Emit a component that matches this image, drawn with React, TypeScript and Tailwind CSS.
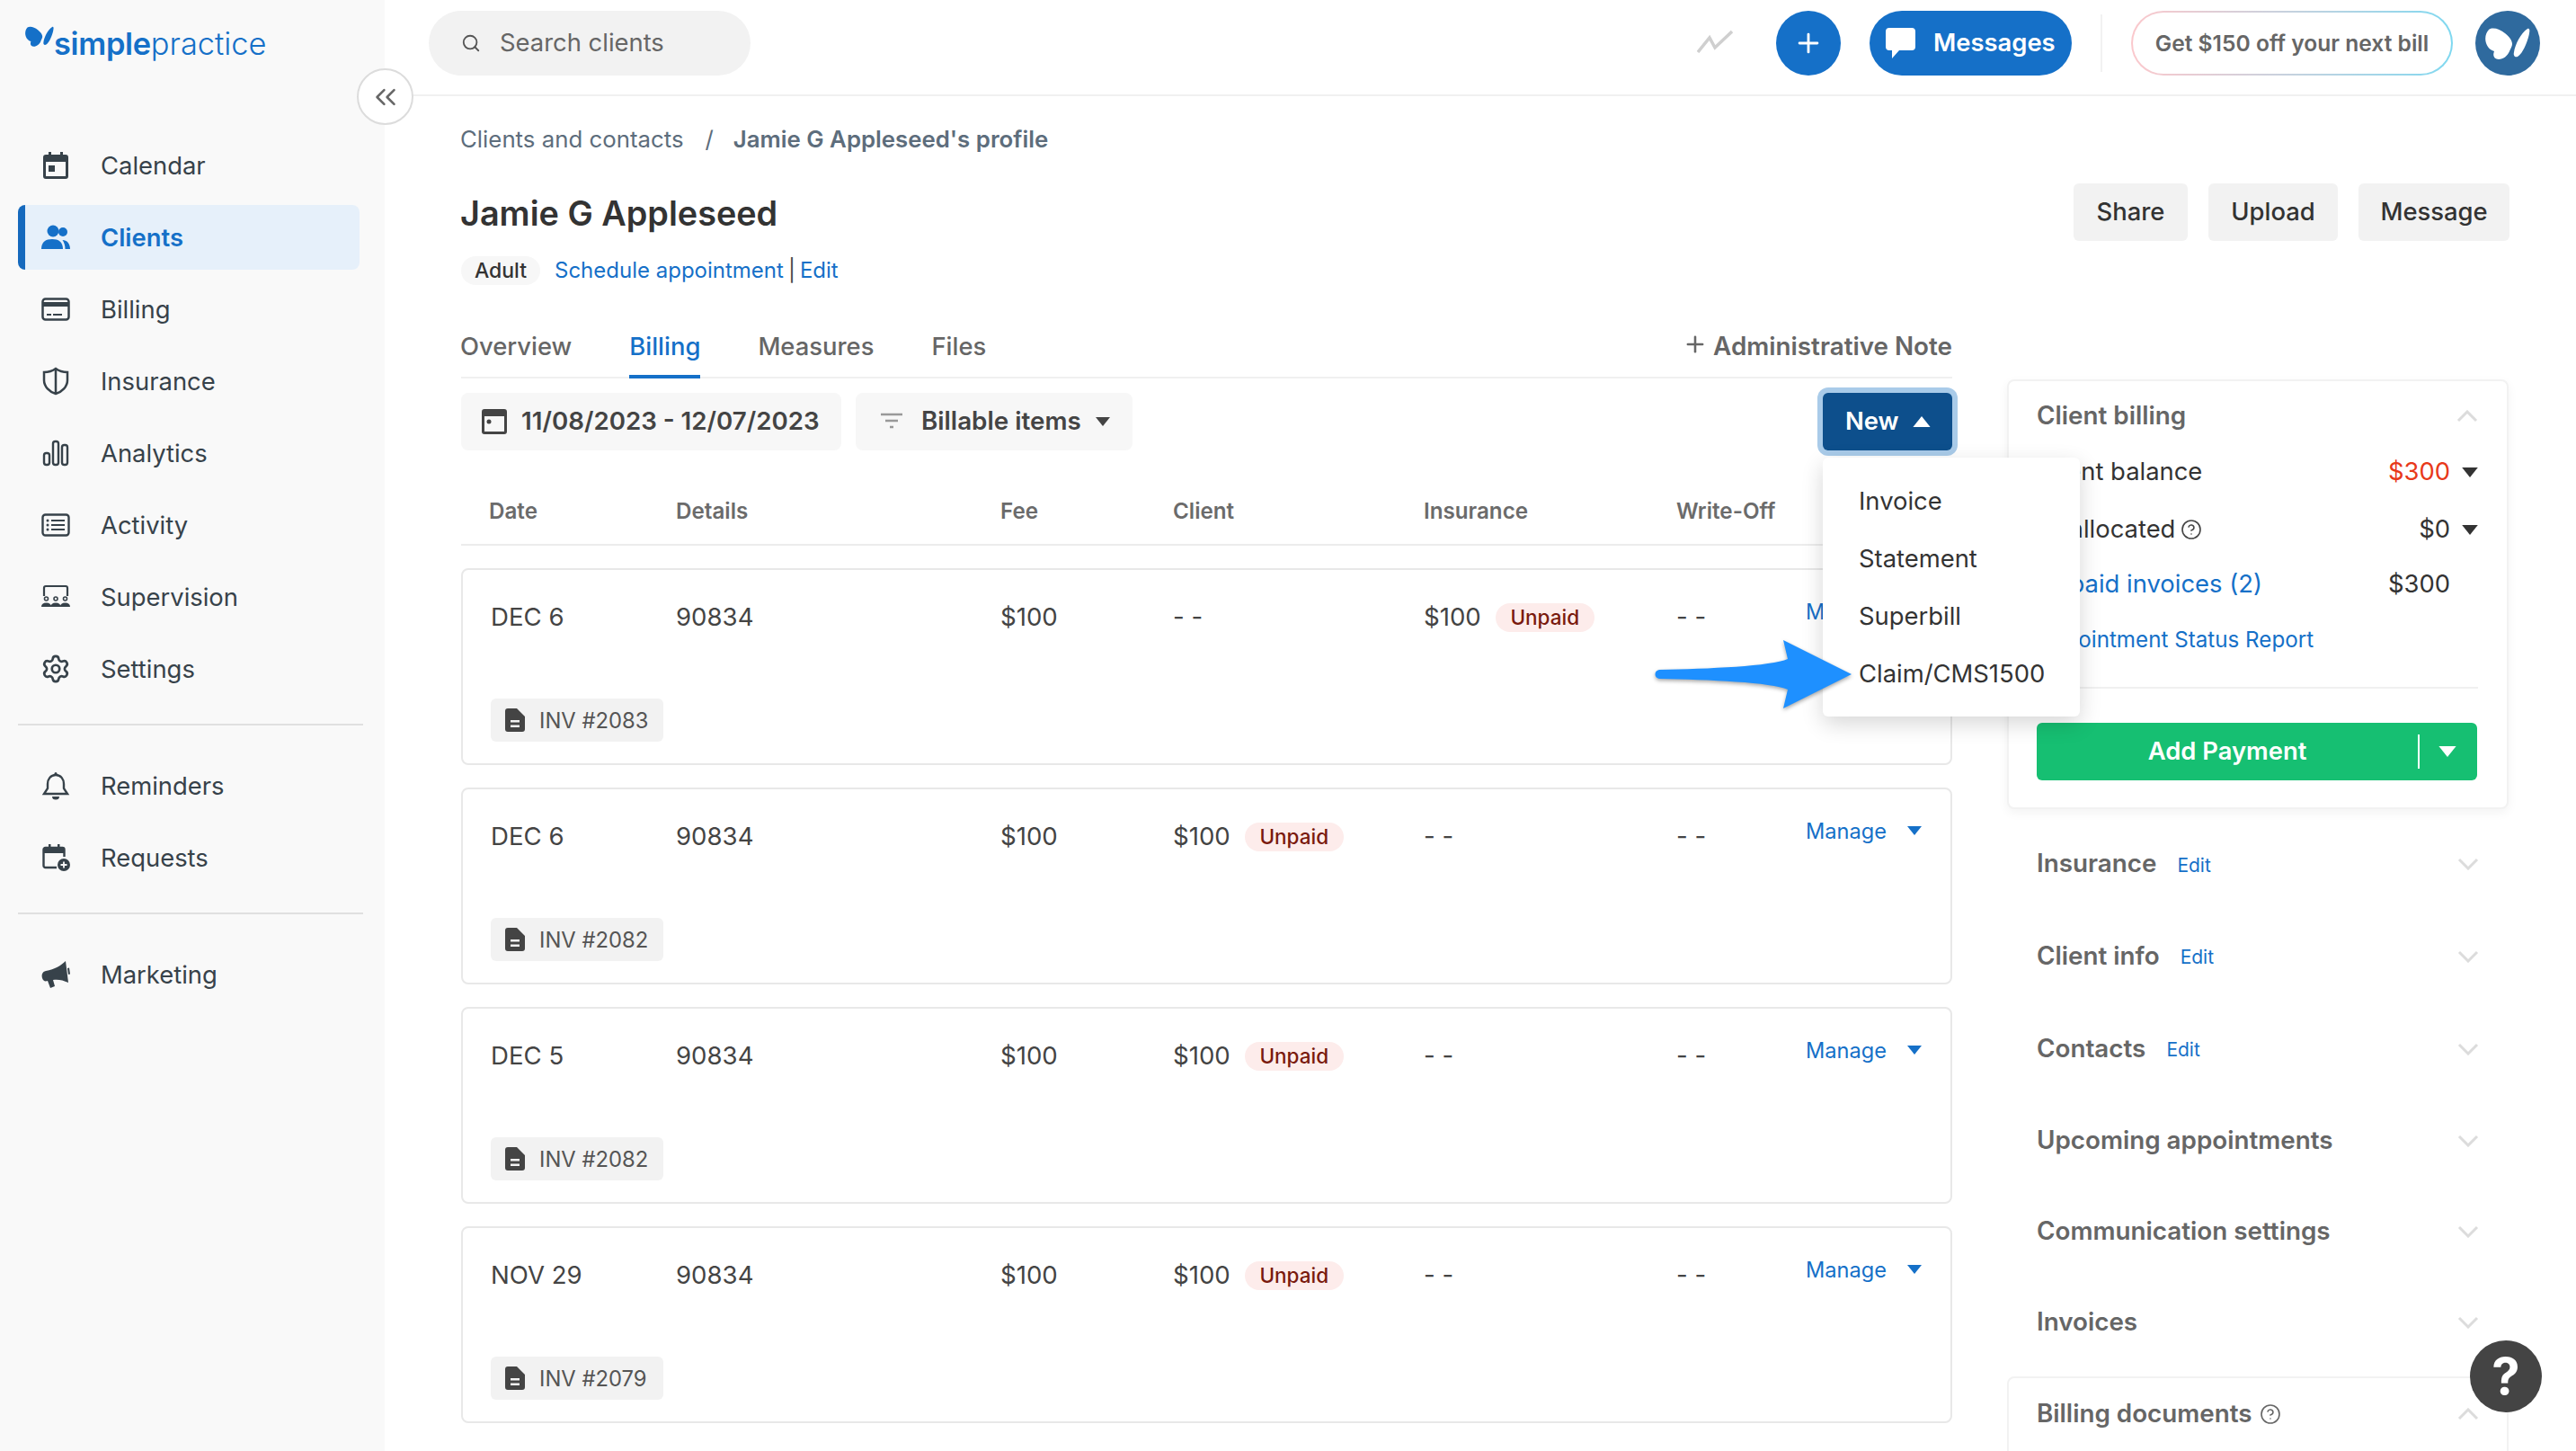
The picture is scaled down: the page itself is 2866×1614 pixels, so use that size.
import { ReactNode } from "react";
import { ChevronsLeft, CircleHelp, Plus, Search, Settings } from "lucide-react";

const Caret = ({ up, className }: { up?: boolean; className?: string }) => (
  <svg viewBox="0 0 16 10" className={className} fill="currentColor">
    <path d={up ? "M8 0l8 10H0z" : "M0 0h16L8 10z"} />
  </svg>
);

const Chevron = ({ up }: { up?: boolean }) => (
  <svg viewBox="0 0 24 14" className="w-[24px] h-[14px] text-[#dcdcdc]" fill="none" stroke="currentColor" strokeWidth="3">
    <path d={up ? "M2 12L12 2l10 10" : "M2 2l10 10L22 2"} />
  </svg>
);

const Butterfly = ({ className }: { className?: string }) => (
  <svg viewBox="0 0 50 37" className={className} fill="currentColor">
    <path d="M4 3c4-3 12-1 18 4 5 4 8 8 8 12 0 3-2 5-3 8-2 5-7 9-12 9s-7-4-5-9c-3-1-7-3-9-9C-1 12 1 6 4 3z" />
    <path d="M47 2c2-1 3 1 2 5-1 7-7 23-13 26-3 1-5-1-4-5 1-8 8-22 15-26z" />
  </svg>
);

const icons: Record<string, ReactNode> = {
  Calendar: (
    <>
      <path fillRule="evenodd" d="M8 1h3v3h10V1h3v3h3a3 3 0 0 1 3 3v21a3 3 0 0 1-3 3H5a3 3 0 0 1-3-3V7a3 3 0 0 1 3-3h3zM5 12v16h22V12z" />
      <rect x="8" y="16" width="7" height="7" />
    </>
  ),
  Clients: (
    <>
      <circle cx="13" cy="9" r="6.500" />
      <circle cx="24" cy="10" r="5" />
      <path d="M0 29c0-8 5-11 12-11s12 3 12 11z" />
      <path d="M26.500 29c0-4-1-7-3-10 5 0 8.500 4 8.500 10z" />
    </>
  ),
  Billing: (
    <>
      <rect x="1.500" y="4.500" width="29" height="23" rx="3" fill="none" stroke="currentColor" strokeWidth="2.500" />
      <rect x="1.500" y="8" width="29" height="5" />
      <rect x="6" y="21" width="5" height="2" />
      <rect x="13" y="21" width="10" height="2" />
    </>
  ),
  Insurance: (
    <path fill="none" stroke="currentColor" strokeWidth="2.500" d="M16 2c4 3 9 4 13 4v9c0 7-6 13-13 15C9 28 3 22 3 15V6c4 0 9-1 13-4zm0 0v28" />
  ),
  Analytics: (
    <g fill="none" stroke="currentColor" strokeWidth="2.400">
      <rect x="3" y="16" width="6" height="13" rx="2.500" />
      <rect x="13" y="3" width="6" height="26" rx="2.500" />
      <rect x="23" y="7" width="6" height="22" rx="2.500" />
    </g>
  ),
  Activity: (
    <>
      <rect x="1.500" y="4.500" width="29" height="23" rx="3" fill="none" stroke="currentColor" strokeWidth="2.400" />
      <circle cx="7" cy="11" r="1.500" />
      <circle cx="7" cy="16" r="1.500" />
      <circle cx="7" cy="21" r="1.500" />
      <path stroke="currentColor" strokeWidth="2.200" d="M11 11h15M11 16h15M11 21h15" />
    </>
  ),
  Supervision: (
    <>
      <path fill="none" stroke="currentColor" strokeWidth="2.200" d="M3 15V6a2 2 0 0 1 2-2h22a2 2 0 0 1 2 2v9" />
      <g fill="none" stroke="currentColor" strokeWidth="1.600">
        <circle cx="5.500" cy="18" r="2" />
        <circle cx="16" cy="18" r="2" />
        <circle cx="26.500" cy="18" r="2" />
      </g>
      <path d="M0 27c0-3 2-4.500 5.500-4.500S11 24 11 27zM10.500 27c0-3 2-4.500 5.500-4.500s5.500 1.500 5.500 4.500zM21 27c0-3 2-4.500 5.500-4.500S32 24 32 27z" />
    </>
  ),
  Reminders: (
    <>
      <path fill="none" stroke="currentColor" strokeWidth="2.400" d="M16 4c-6 0-9 5-9 10v5l-4 6h26l-4-6v-5c0-5-3-10-9-10z" />
      <circle cx="16" cy="2.500" r="1.500" />
      <path d="M12 28h8a4 3.500 0 0 1-8 0z" />
    </>
  ),
  Requests: (
    <>
      <path fill="none" stroke="currentColor" strokeWidth="2.400" d="M17 27H4.500a2 2 0 0 1-2-2V7a2 2 0 0 1 2-2h19a2 2 0 0 1 2 2v8" />
      <path d="M3 5h22v6H3zM8 1h2.500v4H8zM18 1h2.500v4H18z" />
      <circle cx="25" cy="24" r="7" />
      <path stroke="#f9f9f9" strokeWidth="1.800" d="M25 20.500v7M21.500 24h7" />
    </>
  ),
  Marketing: (
    <path d="M27 1c-5 5-12 9-22 11-4 1-5 4-4 8 1 3 3 4 6 3l3 8 5-2-2-7c5-1 11 0 17 3zM29 9l2-.5 1 7-2 .5z" />
  ),
};

const NavItem = ({ label, active }: { label: string; active?: boolean }) => (
  <div
    className={`flex items-center h-[72px] w-[380px] pl-[18px] border-l-[8px] rounded-lg gap-[34px] ${
      active ? "border-[#1569bd] bg-[#e6f0fa] text-[#1570c8] font-semibold" : "border-transparent text-[#37424a]"
    }`}
  >
    {label === "Settings" ? (
      <Settings size={34} strokeWidth={1.900} className="-ml-[1px] -mr-[1px] shrink-0" />
    ) : (
      <svg viewBox="0 0 32 32" className="w-[32px] h-[32px] shrink-0" fill="currentColor">
        {icons[label]}
      </svg>
    )}
    <span className="mt-[2px]">{label}</span>
  </div>
);

const Sidebar = () => (
  <aside className="w-[428px] shrink-0 h-full bg-[#f9f9f9] pt-[26px] pl-[20px] text-[27.400px]">
    <div className="flex items-start h-[42px] pl-[8px] text-[#1570c8]">
      <Butterfly className="w-[32px] h-[25px] mt-[2px] shrink-0" />
      <span className="text-[34.400px] leading-[42px] mt-[2px] -tracking-[0.3px] font-semibold">simple</span>
      <span className="text-[34.400px] leading-[42px] mt-[2px] font-light">practice</span>
    </div>
    <nav className="mt-[80px] flex flex-col gap-[8px]">
      {["Calendar", "Clients", "Billing", "Insurance", "Analytics", "Activity", "Supervision", "Settings"].map((l) => (
        <NavItem key={l} label={l} active={l === "Clients"} />
      ))}
    </nav>
    <div className="w-[384px] h-[2px] bg-[#e0e0e0] mt-[25px] mb-[31px]" />
    <div className="flex flex-col gap-[8px]">
      <NavItem label="Reminders" />
      <NavItem label="Requests" />
    </div>
    <div className="w-[384px] h-[2px] bg-[#e0e0e0] mt-[25px] mb-[31px]" />
    <NavItem label="Marketing" />
  </aside>
);

const TopBar = () => (
  <header className="h-[107px] shrink-0 border-b-2 border-[#f0f0f0] flex items-start pt-[12px] pl-[49px] pr-[40px]">
    <div className="w-[358px] h-[72px] rounded-full bg-[#f2f2f2] flex items-center pl-[36px] gap-[21px] text-[#666] text-[27.400px]">
      <Search size={22} strokeWidth={2} className="text-[#555]" />
      <span>Search clients</span>
    </div>
    <svg viewBox="0 0 40 26" className="ml-auto mt-[21px] w-[40px] h-[26px] text-[#cfcfcf]" fill="none" stroke="currentColor" strokeWidth="3.500">
      <path d="M1 25L14 9l6 11L39 2" />
    </svg>
    <div className="ml-[48px] w-[72px] h-[72px] rounded-full bg-[#1570c8] flex items-center justify-center text-white">
      <Plus size={34} strokeWidth={2} />
    </div>
    <div className="ml-[32px] w-[225px] h-[72px] rounded-full bg-[#1570c8] flex items-center pl-[18px] gap-[20px] text-white font-semibold text-[27.400px]">
      <svg viewBox="0 0 33 34" className="w-[33px] h-[34px]" fill="currentColor">
        <path d="M4 0h25a4 4 0 0 1 4 4v17a4 4 0 0 1-4 4H15l-8 9v-9H4a4 4 0 0 1-4-4V4a4 4 0 0 1 4-4z" />
      </svg>
      <span>Messages</span>
    </div>
    <div className="ml-[32px] w-[2px] h-[64px] mt-[4px] bg-[#f2f2f2]" />
    <div className="ml-[32px] w-[358px] h-[72px] rounded-full p-[2px] bg-gradient-to-r from-[#fbc8cc] to-[#7ed8f0]">
      <div className="w-full h-full rounded-full bg-white flex items-center justify-center text-[#666] font-semibold text-[24.600px]">
        Get $150 off your next bill
      </div>
    </div>
    <div className="ml-[25px] w-[72px] h-[72px] rounded-full bg-[#2f6a9e] flex items-center justify-center text-white">
      <Butterfly className="w-[50px] h-[37px]" />
    </div>
  </header>
);

const gridCols = "grid grid-cols-[208px_361px_192px_279px_281px_144px_1fr]";
const cardCols = "grid grid-cols-[206px_361px_192px_279px_281px_144px_1fr]";

const Unpaid = () => (
  <span className="ml-[16px] inline-flex items-center justify-center w-[110px] h-[32px] rounded-full bg-[#fdeceb] text-[#7a1a0e] font-medium text-[22.500px]">
    Unpaid
  </span>
);

const Money = () => (
  <span className="flex items-center">
    $100
    <Unpaid />
  </span>
);

const rows = [
  { date: "DEC 6", inv: "INV #2083", onInsurance: true },
  { date: "DEC 6", inv: "INV #2082" },
  { date: "DEC 5", inv: "INV #2082" },
  { date: "NOV 29", inv: "INV #2079" },
];

const BillingCard = ({ date, inv, onInsurance }: { date: string; inv: string; onInsurance?: boolean }) => (
  <div className="h-[219px] border-2 border-[#e8e8e8] rounded-lg pt-[32px] pb-[24px] pl-[31px] flex flex-col justify-between text-[#444] text-[27.600px]">
    <div className={`${cardCols} items-center h-[36px]`}>
      <span>{date}</span>
      <span>90834</span>
      <span>$100</span>
      {onInsurance ? <span>- -</span> : <Money />}
      {onInsurance ? <Money /> : <span>- -</span>}
      <span>- -</span>
      <span className="flex items-center -mt-[13px] text-[#1570c8] text-[23.600px]">
        Manage
        <Caret className="ml-[23px] w-[16px] h-[10px]" />
      </span>
    </div>
    <div className="self-start flex items-center w-[192px] h-[48px] rounded-md bg-[#f2f2f2] pl-[16px] gap-[16px] text-[23.800px] text-[#555]">
      <svg viewBox="0 0 22 26" className="w-[22px] h-[26px] text-[#444]" fill="currentColor">
        <path
          fillRule="evenodd"
          d="M3 0h10l9 9v14a3 3 0 0 1-3 3H3a3 3 0 0 1-3-3V3a3 3 0 0 1 3-3zM6 13v2.500h10V13zM6 18.500V21h10v-2.500z"
        />
      </svg>
      <span className="mt-[2px]">{inv}</span>
    </div>
  </div>
);

const NewMenu = () => (
  <div className="absolute left-0 top-[72px] z-20 w-[286px] h-[288px] rounded-md bg-white shadow-[0_8px_24px_rgba(0,0,0,0.16)] pt-[17px] pl-[40px] text-[27.400px] text-[#333]">
    {["Invoice", "Statement", "Superbill", "Claim/CMS1500"].map((m) => (
      <div key={m} className="h-[64px] flex items-center">
        {m}
      </div>
    ))}
  </div>
);

const LeftColumn = () => (
  <div className="w-[1659px] shrink-0">
    <div className="h-[71px] border-b-2 border-[#f0f0f0] flex text-[27.400px] font-medium text-[#666]">
      <span className="-ml-[1px] mr-[64px] pt-[15px]">Overview</span>
      <span className="mr-[64px] pt-[15px] h-[71px] border-b-4 border-[#1570c8] text-[#1570c8]">Billing</span>
      <span className="mr-[64px] pt-[15px]">Measures</span>
      <span className="pt-[15px]">Files</span>
      <span className="ml-auto pt-[15px] flex items-start gap-[6px] font-semibold text-[27.800px]">
        <Plus size={28} strokeWidth={2.200} className="mt-[4px]" />
        Administrative Note
      </span>
    </div>
    <div className="mt-[16px] flex items-center gap-[16px] h-[64px]">
      <div className="h-[64px] w-[423px] rounded-lg bg-[#f7f7f7] flex items-center pl-[23px] gap-[16px] text-[#444] font-semibold text-[27.700px]">
        <svg viewBox="0 0 28 28" className="w-[28px] h-[28px] text-[#444]" fill="currentColor">
          <path fillRule="evenodd" d="M3 0h22a3 3 0 0 1 3 3v22a3 3 0 0 1-3 3H3a3 3 0 0 1-3-3V3a3 3 0 0 1 3-3zM3 8v17h22V8z" />
          <circle cx="8" cy="14" r="2.500" />
        </svg>
        <span>11/08/2023 - 12/07/2023</span>
      </div>
      <div className="h-[64px] w-[308px] rounded-lg bg-[#f7f7f7] flex items-center pl-[28px] text-[#444] font-semibold text-[27.800px]">
        <svg viewBox="0 0 24 24" className="w-[24px] h-[24px] text-[#999]" fill="none" stroke="currentColor" strokeWidth="2.500">
          <path d="M0 4h24M5 11h14M10 18h4" />
        </svg>
        <span className="ml-[21px]">Billable items</span>
        <Caret className="ml-[16px] w-[16px] h-[10px]" />
      </div>
      <div className="ml-auto relative">
        <div className="w-[144px] h-[64px] rounded-md bg-[#0d4f8c] ring-[6px] ring-[#a9cbe9] flex items-center pl-[25px] gap-[15px] text-white font-semibold text-[27.400px]">
          <span>New</span>
          <Caret up className="w-[20px] h-[12px]" />
        </div>
        <NewMenu />
      </div>
    </div>
    <div className={`${gridCols} h-[106px] pt-[33px] pl-[31px] items-center border-b-2 border-[#ececec] text-[24.200px] font-semibold text-[#6b6b6b]`}>
      {["Date", "Details", "Fee", "Client", "Insurance", "Write-Off"].map((h) => (
        <span key={h}>{h}</span>
      ))}
    </div>
    <div className="mt-[25px] flex flex-col gap-[25px]">
      {rows.map((r, i) => (
        <BillingCard key={i} {...r} />
      ))}
    </div>
  </div>
);

const BillingRow = ({ label, value, valueClass, caret }: { label: ReactNode; value: string; valueClass?: string; caret?: boolean }) => (
  <div className="flex items-center h-[36px]">
    <span className="flex-1 flex items-center gap-[6px]">{label}</span>
    <span className={valueClass}>{value}</span>
    <span className="w-[31px] flex justify-end">{caret && <Caret className="w-[18px] h-[11px] text-[#333]" />}</span>
  </div>
);

const AccordionRow = ({ title, edit, className }: { title: string; edit?: boolean; className: string }) => (
  <div className={`flex items-center pl-[33px] pr-[33px] font-semibold text-[27.800px] text-[#666] ${className}`}>
    <span>{title}</span>
    {edit && <span className="ml-[23px] mt-[3px] text-[#1570c8] font-normal text-[21px]">Edit</span>}
    <span className="ml-auto">
      <Chevron />
    </span>
  </div>
);

const RightColumn = () => (
  <div className="w-[558px] shrink-0 pt-[72px]">
    <div className="border-2 border-[#f2f2f2] rounded-lg bg-white shadow-[0_4px_12px_rgba(0,0,0,0.05)] pt-[23px] pb-[30px] pl-[31px] pr-[32px] h-[478px] text-[27.400px] text-[#333]">
      <div className="h-[32px] flex items-center justify-between font-semibold text-[27.800px] text-[#666]">
        <span>Client billing</span>
        <Chevron up />
      </div>
      <div className="mt-[28px]">
        <BillingRow label="Client balance" value="$300" valueClass="text-[#e8391a]" caret />
      </div>
      <div className="mt-[28px]">
        <BillingRow
          label={
            <>
              Unallocated
              <CircleHelp size={24} strokeWidth={1.600} className="text-[#444]" />
            </>
          }
          value="$0"
          caret
        />
      </div>
      <div className="mt-[25px]">
        <BillingRow label={<span className="text-[#1570c8]">Unpaid invoices (2)</span>} value="$300" />
      </div>
      <div className="mt-[26px] h-[36px] flex items-center text-[#1570c8] text-[24.200px]">Appointment Status Report</div>
      <div className="mt-[34px] h-[2px] bg-[#f0f0f0]" />
      <div className="mt-[38px] h-[64px] w-[490px] rounded-md bg-[#16bf72] flex items-center text-white font-semibold">
        <span className="w-[424px] text-center">Add Payment</span>
        <span className="w-[2px] h-[38px] bg-white" />
        <Caret className="ml-[21px] w-[20px] h-[12px]" />
      </div>
    </div>
    <div className="pt-[10px]">
      <AccordionRow title="Insurance" edit className="h-[102px]" />
      <AccordionRow title="Client info" edit className="h-[103px]" />
      <AccordionRow title="Contacts" edit className="h-[103px]" />
      <AccordionRow title="Upcoming appointments" className="h-[102px]" />
      <AccordionRow title="Communication settings" className="h-[100px]" />
      <AccordionRow title="Invoices" className="h-[102px]" />
    </div>
    <div className="mt-[9px] h-[120px] border-2 border-[#f2f2f2] rounded-lg pt-[24px] pl-[31px] pr-[31px]">
      <div className="h-[32px] flex items-center font-semibold text-[27.800px] text-[#666]">
        <span>Billing documents</span>
        <CircleHelp size={24} strokeWidth={1.600} className="ml-[8px] text-[#666]" />
        <span className="ml-auto">
          <Chevron up />
        </span>
      </div>
    </div>
  </div>
);

export default function App() {
  return (
    <div className="relative w-[2866px] h-[1614px] overflow-hidden flex bg-white [font-family:Inter,sans-serif]">
      <Sidebar />
      <main className="flex-1 flex flex-col min-w-0">
        <TopBar />
        <div className="pl-[85px] pr-[74px] pt-[30px] flex-1">
          <div className="-ml-[1px] h-[36px] flex items-center text-[#5d6d7c] text-[25.800px]">
            <span>Clients and contacts</span>
            <span className="ml-[24px]">/</span>
            <span className="ml-[22px] font-semibold">Jamie G Appleseed's profile</span>
          </div>
          <div className="mt-[31px] h-[64px] flex items-center">
            <h1 className="-ml-[1px] mt-[2px] text-[37.800px] font-semibold text-[#333]">Jamie G Appleseed</h1>
            <div className="ml-auto flex gap-[23px] text-[27.400px] font-medium text-[#333]">
              <span className="w-[127px] h-[64px] rounded-md bg-[#f2f2f2] flex items-center justify-center">Share</span>
              <span className="w-[144px] h-[64px] rounded-md bg-[#f2f2f2] flex items-center justify-center">Upload</span>
              <span className="w-[168px] h-[64px] rounded-md bg-[#f2f2f2] flex items-center justify-center">Message</span>
            </div>
          </div>
          <div className="mt-[17px] h-[32px] flex items-center text-[24px] text-[#1570c8]">
            <span className="w-[88px] h-[32px] rounded-full bg-[#f7f7f7] flex items-center justify-center text-[23px] font-medium text-[#333]">Adult</span>
            <span className="ml-[16px]">Schedule appointment</span>
            <span className="mx-[5px] text-[#444]">|</span>
            <span>Edit</span>
          </div>
          <div className="mt-[33px] flex gap-[61px]">
            <LeftColumn />
            <RightColumn />
          </div>
        </div>
      </main>

      <button className="absolute left-[397px] top-[76px] w-[63px] h-[63px] rounded-full border-2 border-[#dcdcdc] bg-white flex items-center justify-center text-[#666]">
        <ChevronsLeft size={38} strokeWidth={1.600} />
      </button>

      <svg viewBox="0 0 219 76" className="absolute left-[1841px] top-[712px] w-[219px] h-[76px] z-30 drop-shadow-[0_2px_2px_rgba(0,0,0,0.35)]" fill="#1e90ff">
        <path d="M5 33c55-1 125-4 143-12L143 0l76 38-76 38 5-21c-18-8-88-11-143-12-6-1-6-9 0-10z" />
      </svg>

      <button className="absolute left-[2748px] top-[1491px] z-30 w-[80px] h-[80px] rounded-full bg-[#444] flex items-center justify-center text-white text-[56px] font-bold">
        ?
      </button>
    </div>
  );
}
